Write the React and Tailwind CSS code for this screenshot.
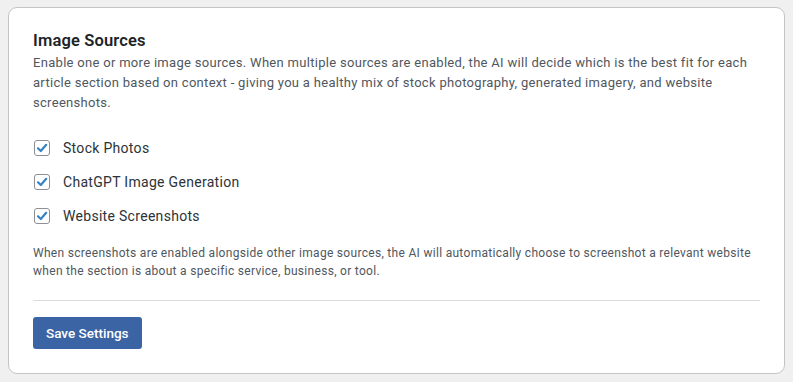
import React from "react";

function Check({ label }) {
  return (
    <label className="flex items-center h-[34px]">
      <span className="w-4 h-4 rounded-[3px] border border-[#8c8f94] bg-white flex items-center justify-center ml-[1px]">
        <svg width="12" height="12" viewBox="0 0 12 12">
          <path d="M2 6.3 L4.8 9 L10.2 2.8" fill="none" stroke="#3582c4" strokeWidth="2.2" strokeLinecap="round" strokeLinejoin="round" />
        </svg>
      </span>
      <span className="ml-[13px] text-[14px] text-[#2c3338] tracking-[0.3px]">{label}</span>
    </label>
  );
}

export default function App() {
  return (
    <div className="bg-[#f0f0f1] h-[382px] pt-[7px] px-[8px] font-['Roboto',sans-serif]">
      <div className="bg-white border border-[#c3c4c7] rounded-[9px] h-[367px] px-[24px] pt-[21px]">
        <h2 className="text-[16.5px] leading-[24px] font-semibold text-[#1d2327] tracking-[0.15px]">Image Sources</h2>
        <p className="text-[13px] leading-[20px] text-[#50575e] whitespace-nowrap tracking-[0.3px]">
          Enable one or more image sources. When multiple sources are enabled, the AI will decide which is the best fit for each
          <br />
          article section based on context - giving you a healthy mix of stock photography, generated imagery, and website
          <br />
          screenshots.
        </p>
        <div className="mt-[18px] flex flex-col">
          <Check label="Stock Photos" />
          <Check label="ChatGPT Image Generation" />
          <Check label="Website Screenshots" />
        </div>
        <p className="mt-[11px] text-[12px] leading-[18px] text-[#50575e] whitespace-nowrap tracking-[0.3px]">
          When screenshots are enabled alongside other image sources, the AI will automatically choose to screenshot a relevant website
          <br />
          when the section is about a specific service, business, or tool.
        </p>
        <div className="mt-[20px] border-t border-[#dcdcde]" />
        <button className="mt-[16px] h-[32px] px-[13px] rounded-[3px] bg-[#3a64a3] text-white text-[13.5px] font-medium">
          Save Settings
        </button>
      </div>
    </div>
  );
}
